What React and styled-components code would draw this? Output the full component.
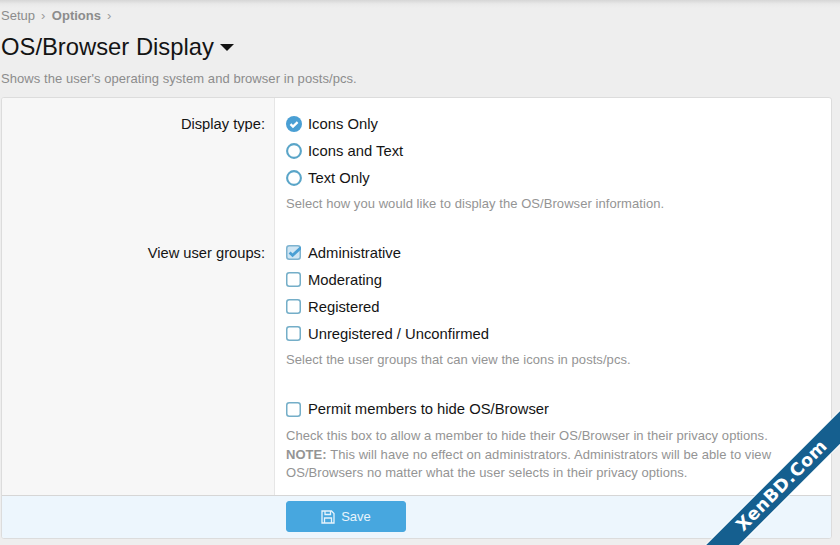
import React from "react";
import styled, { createGlobalStyle } from "styled-components";

const Global = createGlobalStyle`
  html, body { margin: 0; padding: 0; }
  body {
    width: 840px; height: 545px; overflow: hidden; position: relative;
    background: #eeeeee;
    font-family: "Liberation Sans", Arial, sans-serif;
    color: #141414;
  }
`;

const Page = styled.div`
  height: 545px;
  display: flex;
  flex-direction: column;
  padding: 0 9px 0 1px;
  box-sizing: border-box;
  background: linear-gradient(to bottom, #d6d6d6 0, #e9e9e9 4px, #eeeeee 8px);
`;
const Crumbs = styled.nav`
  display: flex;
  align-items: center;
  height: 14px;
  margin-top: 8px;
  margin-bottom: 1px;
  font-size: 13px;
  color: #8c8c8c;
`;
const Crumb = styled.span`
  font-weight: ${(p) => (p.$strong ? 700 : 400)};
`;
const Sep = styled.span`
  margin: 0 6.5px 0 6px;
  font-size: 13px;
  color: #9a9a9a;
`;
const TitleRow = styled.div`
  display: flex;
  align-items: center;
  gap: 6px;
  margin-top: 9px;
  height: 30px;
`;
const Title = styled.h1`
  margin: 0;
  font-size: 23.8px;
  font-weight: 400;
  color: #141414;
  line-height: 30px;
`;
const Caret = styled.span`
  width: 0;
  height: 0;
  border-left: 7px solid transparent;
  border-right: 7px solid transparent;
  border-top: 7px solid #141414;
`;
const Desc = styled.p`
  margin: 9px 0 0;
  font-size: 13px;
  line-height: 15px;
  color: #8c8c8c;
  letter-spacing: 0.06px;
`;
const Panel = styled.form`
  margin-top: 11px;
  width: 831px;
  height: 442px;
  box-sizing: border-box;
  border: 1px solid #dcdcdc;
  border-radius: 3px;
  background: #fff;
  display: flex;
  flex-direction: column;
  overflow: hidden;
`;
const Body = styled.div`
  flex: 1;
  display: grid;
  grid-template-columns: 273px 1fr;
  min-height: 0;
`;
const Labels = styled.div`
  background: #f7f7f7;
  border-right: 1px solid #e6e6e6;
  padding: 18px 9px 0 0;
  display: flex;
  flex-direction: column;
  align-items: flex-end;
  font-size: 14.7px;
  color: #141414;
`;
const FieldLabel = styled.div`
  line-height: 16px;
  height: 16px;
  margin-bottom: ${(p) => p.$gap || 0}px;
`;
const Fields = styled.div`
  padding: 17px 10px 0 11px;
`;
const Group = styled.ul`
  list-style: none;
  margin: 0;
  padding: 0;
  display: flex;
  flex-direction: column;
  gap: 9px;
`;
const Option = styled.li`
  display: flex;
  align-items: center;
  gap: ${(p) => (p.$wide ? 6 : 7)}px;
  height: 18px;
  font-size: 14.8px;
  color: #141414;
`;
const Mark = styled.span`
  height: ${(p) => (p.$wide ? 16 : 15)}px;
  width: ${(p) => (p.$wide ? 16 : 15)}px;
  display: flex;
  flex-shrink: 0;
`;
const Hint = styled.div`
  margin-top: ${(p) => p.$top}px;
  margin-bottom: ${(p) => p.$bottom || 0}px;
  font-size: 13px;
  letter-spacing: 0.06px;
  line-height: 18.5px;
  color: #949494;
`;
const Note = styled.strong`
  font-weight: 700;
`;
const Footer = styled.div`
  height: 43px;
  flex-shrink: 0;
  box-sizing: border-box;
  border-top: 1px solid #d6d6d6;
  background: #edf6fd;
  padding: 5px 0 0 284px;
`;
const SaveButton = styled.button`
  width: 120px;
  height: 31px;
  border: 1px solid #47a7df;
  border-radius: 3px;
  background: #47a7df;
  color: #e8f4fc;
  font-family: inherit;
  font-size: 13px;
  display: flex;
  align-items: center;
  justify-content: center;
  gap: 6px;
  padding: 0;
`;
const Ribbon = styled.div`
  position: absolute;
  left: 672px;
  top: 474px;
  width: 220px;
  height: 23px;
  background: #155f8f;
  box-shadow: 0 0 0 1px rgba(255,255,255,.75);
  transform: rotate(-45deg);
  color: #fff;
  font-family: "DejaVu Sans", sans-serif;
  font-weight: 700;
  font-size: 17.5px;
  letter-spacing: 0.6px;
  line-height: 23px;
  display: flex;
  justify-content: center;
`;

const RadioOn = () => (
  <svg width="16" height="16" viewBox="0 0 16 16">
    <circle cx="8" cy="8" r="8" fill="#4a9fd4" />
    <path d="M4.5 8.1l2.5 2.5 4.6-4.5" fill="none" stroke="#fff" strokeWidth="2.3" />
  </svg>
);
const RadioOff = () => (
  <svg width="16" height="16" viewBox="0 0 16 16">
    <circle cx="8" cy="8" r="6.9" fill="#fff" stroke="#5aa5c8" strokeWidth="2.1" />
  </svg>
);
const CheckOn = () => (
  <svg width="15" height="15" viewBox="0 0 15 15">
    <rect x="0.75" y="0.75" width="13.5" height="13.5" rx="2.5" fill="#cfe5f3" stroke="#7db3d0" strokeWidth="1.5" />
    <path d="M3.6 7.4l3 3L15 2.6" fill="none" stroke="#4a9fd4" strokeWidth="2.8" />
  </svg>
);
const CheckOff = () => (
  <svg width="15" height="15" viewBox="0 0 15 15">
    <rect x="0.75" y="0.75" width="13.5" height="13.5" rx="2.5" fill="#fff" stroke="#74aec8" strokeWidth="1.5" />
  </svg>
);
const Floppy = () => (
  <svg width="14" height="14" viewBox="0 0 14 14" fill="none" stroke="#e8f4fc" strokeWidth="1.3">
    <path d="M1 1h9.5L13 3.5V13H1z" />
    <path d="M4 1v3.5h5.5V1M3.5 13V8h7v5" />
  </svg>
);

const Item = ({ icon, wide, children }) => (
  <Option $wide={wide}>
    <Mark $wide={wide}>{icon}</Mark>
    {children}
  </Option>
);

export default function App() {
  return (
    <>
      <Global />
      <Page>
        <Crumbs>
          <Crumb>Setup</Crumb>
          <Sep>›</Sep>
          <Crumb $strong>Options</Crumb>
          <Sep>›</Sep>
        </Crumbs>
        <TitleRow>
          <Title>OS/Browser Display</Title>
          <Caret />
        </TitleRow>
        <Desc>Shows the user's operating system and browser in posts/pcs.</Desc>
        <Panel>
          <Body>
            <Labels>
              <FieldLabel $gap={113}>Display type:</FieldLabel>
              <FieldLabel>View user groups:</FieldLabel>
            </Labels>
            <Fields>
              <Group>
                <Item wide icon={<RadioOn />}>Icons Only</Item>
                <Item wide icon={<RadioOff />}>Icons and Text</Item>
                <Item wide icon={<RadioOff />}>Text Only</Item>
              </Group>
              <Hint $top={8} $bottom={30}>Select how you would like to display the OS/Browser information.</Hint>
              <Group>
                <Item icon={<CheckOn />}>Administrative</Item>
                <Item icon={<CheckOff />}>Moderating</Item>
                <Item icon={<CheckOff />}>Registered</Item>
                <Item icon={<CheckOff />}>Unregistered / Unconfirmed</Item>
              </Group>
              <Hint $top={8} $bottom={31}>Select the user groups that can view the icons in posts/pcs.</Hint>
              <Group>
                <Item icon={<CheckOff />}>Permit members to hide OS/Browser</Item>
              </Group>
              <Hint $top={9}>
                Check this box to allow a member to hide their OS/Browser in their privacy options.
                <br />
                <Note>NOTE:</Note> This will have no effect on administrators. Administrators will be able to view
                <br />
                OS/Browsers no matter what the user selects in their privacy options.
              </Hint>
            </Fields>
          </Body>
          <Footer>
            <SaveButton type="button">
              <Floppy />
              Save
            </SaveButton>
          </Footer>
        </Panel>
      </Page>
      <Ribbon>XenBD.Com</Ribbon>
    </>
  );
}
